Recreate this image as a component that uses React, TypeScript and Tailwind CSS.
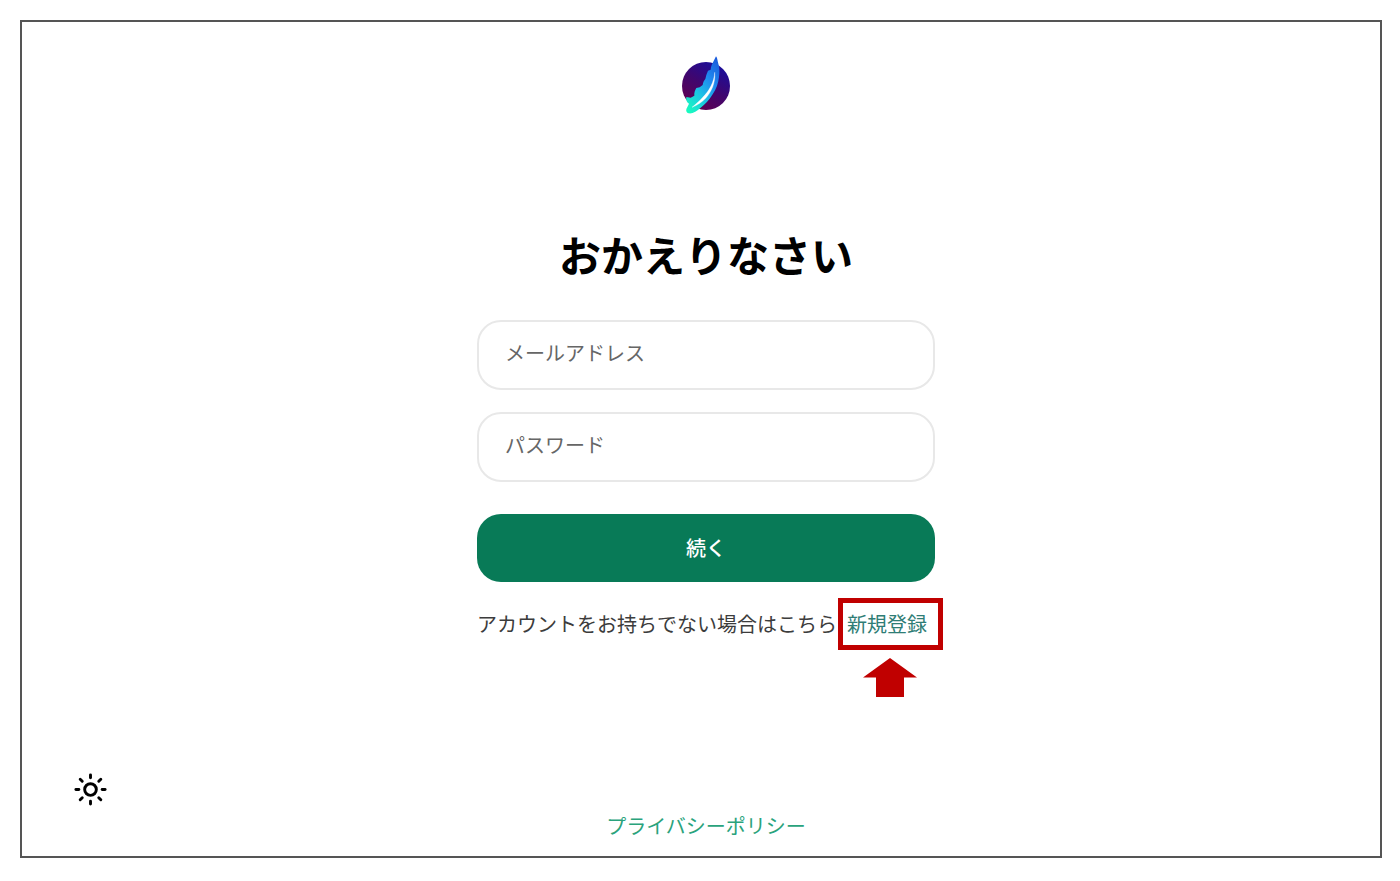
import { Sun } from "lucide-react";

function FeatherLogo() {
  return (
    <svg viewBox="30 22 156 180" className="h-[60px] w-[52px]" role="img" aria-label="Logo">
      <defs>
        <linearGradient id="disc" x1="0.2" y1="1" x2="0.8" y2="0">
          <stop offset="0" stopColor="#66004c" />
          <stop offset="0.5" stopColor="#40066e" />
          <stop offset="1" stopColor="#160fa0" />
        </linearGradient>
        <linearGradient id="feather" x1="0.85" y1="0" x2="0.15" y2="1">
          <stop offset="0" stopColor="#1a5cdc" />
          <stop offset="0.35" stopColor="#1f8cf0" />
          <stop offset="0.65" stopColor="#1cc4e4" />
          <stop offset="1" stopColor="#18fac0" />
        </linearGradient>
      </defs>
      <circle cx="108" cy="115" r="72" fill="url(#disc)" />
      <path
        d="M138 26 C143 32 142 40 145 48 C149 60 149 74 147 88 C145 106 139 124 128 140 C117 158 105 170 92 180 C80 191 68 199 56 197 C48 195 47 186 51 180 L57 168 C50 164 47 156 49 148 L62 150 L73 144 C72 135 75 128 79 121 L89 119 L98 112 C99 105 102 98 106 94 L109 82 L114 69 L122 66 C122 56 128 46 131 40 Z"
        fill="url(#feather)"
      />
      <path
        d="M134 74 C133 102 117 131 99 148 C88 160 77 170 66 179 C82 173 96 163 107 152 C124 133 137 106 134 74 Z"
        fill="#fff"
        stroke="#fff"
        strokeWidth="1"
      />
    </svg>
  );
}

function Field({ id, type, label }: { id: string; type: string; label: string }) {
  return (
    <input
      id={id}
      type={type}
      aria-label={label}
      placeholder={label}
      className="block h-[70px] w-full rounded-3xl border-2 border-[#e8e8e8] bg-white px-[26px] pb-1.5 text-xl text-gray-900 placeholder:text-[#666]"
    />
  );
}

export default function App() {
  return (
    <div className="flex min-h-screen flex-col bg-white pt-5 pr-[18px] pb-[23px] pl-5 font-['Noto_Sans_CJK_JP',sans-serif]">
      <div className="flex flex-1 flex-col border-2 border-[#555] pl-[10px]">
        <header className="flex justify-center pt-[33px]">
          <FeatherLogo />
        </header>

        <main className="mx-auto w-full max-w-[458px] flex-1 pt-[109px]">
          <h1 className="text-center text-[42px] leading-[60px] font-bold whitespace-nowrap text-black">
            おかえりなさい
          </h1>
          <form className="mt-9" onSubmit={(e) => e.preventDefault()}>
            <div className="flex flex-col gap-[22px]">
              <Field id="email" type="email" label="メールアドレス" />
              <Field id="password" type="password" label="パスワード" />
            </div>
            <button
              type="submit"
              className="mt-8 block h-[68px] w-full rounded-3xl bg-[#087a57] text-xl font-medium text-white"
            >
              続く
            </button>
          </form>
          <p className="mt-7 flex items-center gap-[10px] text-xl leading-7 whitespace-nowrap text-[#3c3c3c]">
            アカウントをお持ちでない場合はこちら
            <span className="relative">
              <a href="#signup" className="text-[#2f7d75]">
                新規登録
              </a>
              <span className="pointer-events-none absolute -top-3 -right-4 -bottom-3 -left-[9px] border-5 border-[#c00000]" />
              <svg
                viewBox="0 0 54 39"
                className="pointer-events-none absolute top-12 left-4 h-[39px] w-[54px]"
                fill="#c00000"
                aria-hidden="true"
              >
                <path d="M27 0 54 19.500H41V39H13V19.500H0Z" />
              </svg>
            </span>
          </p>
        </main>

        <footer className="grid grid-cols-[1fr_auto_1fr] items-end pb-4">
          <button type="button" aria-label="テーマ切り替え" className="mb-[33px] ml-[41px] w-fit text-black">
            <Sun size={35} strokeWidth={2} />
          </button>
          <a href="#privacy" className="text-xl text-[#2aa37c]">
            プライバシーポリシー
          </a>
        </footer>
      </div>
    </div>
  );
}
